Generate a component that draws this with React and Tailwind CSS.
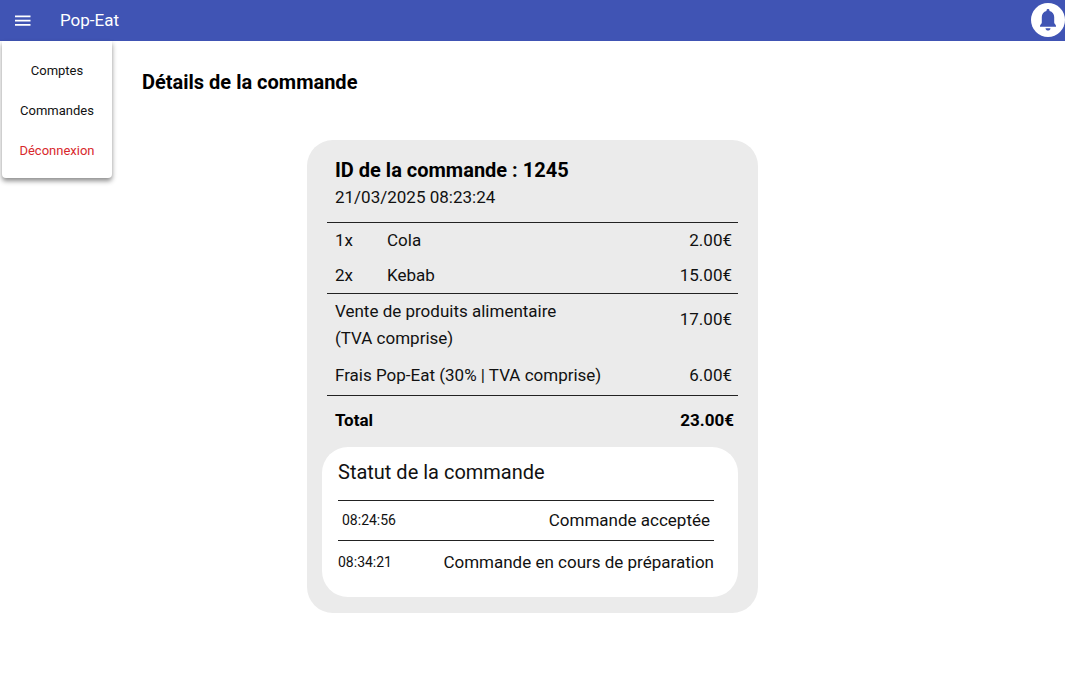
import React from "react";

const items = [
  { qty: "1x", name: "Cola", price: "2.00€" },
  { qty: "2x", name: "Kebab", price: "15.00€" },
];

const navLink = "flex h-10 items-center justify-center";

export default function App() {
  return (
    <div className="min-h-screen bg-white text-[#111] font-['Roboto',sans-serif]">
      <header className="flex h-[41px] items-start justify-between bg-[#4054b4] pt-[3px] pl-3.5 text-white">
        <div className="flex h-[35px] items-center gap-7">
          <button type="button" aria-label="Menu" className="flex h-8 w-[18px] items-center justify-center">
            <svg viewBox="0 0 16 12" className="h-3 w-4" fill="currentColor">
              <path d="M0 .5h15.500v1.700H0zM0 4.800h15.500v1.700H0zM0 9.100h15.500v1.700H0z" />
            </svg>
          </button>
          <a href="#accueil" className="text-[17px]">Pop-Eat</a>
        </div>
        <button type="button" aria-label="Notifications" className="flex size-[34px] items-center justify-center rounded-full bg-white text-[#4054b4]">
          <svg viewBox="0 0 18 22" className="h-[22px] w-[18px]" fill="currentColor">
            <path d="M9 0c-.9 0-1.500.6-1.500 1.400v.5C4.500 2.600 2.800 5 2.800 8v5.500C2.800 15.200 1 15.600 1 17v.8h16V17c0-1.400-1.800-1.800-1.800-3.500V8c0-3-1.700-5.400-4.700-6.100v-.5C10.500.6 9.900 0 9 0z" />
            <path d="M6.500 19.300h5c-.2 1.400-1.100 2.300-2.500 2.300s-2.300-.9-2.500-2.300z" />
          </svg>
        </button>
      </header>

      <div className="relative">
        <nav className="absolute top-0 left-0.5 flex w-[110px] flex-col rounded-b bg-white pt-2.5 pb-[7px] text-[13px] shadow-[0_3px_5px_rgba(0,0,0,0.45)]">
          <a href="#comptes" className={navLink}>Comptes</a>
          <a href="#commandes" className={navLink}>Commandes</a>
          <a href="#deconnexion" className={`${navLink} text-[#d8282c]`}>Déconnexion</a>
        </nav>

        <main className="pt-[27px] pb-10">
          <h1 className="pl-[142px] text-xl leading-7 font-bold text-black">Détails de la commande</h1>
          <section className="mx-auto mt-11 w-full max-w-[451px] rounded-[26px] bg-[#ebebeb] pt-4 pr-5 pb-4 pl-[15px]">
            <div className="pl-[5px]">
              <div className="border-b border-[#222] px-2 pb-3">
                <h2 className="text-xl leading-7 font-bold text-black">ID de la commande : 1245</h2>
                <p className="text-[17px] leading-[26px]">21/03/2025 08:23:24</p>
              </div>
              <table className="w-full text-[17px]">
                <tbody className="leading-[35px]">
                  {items.map((item) => (
                    <tr key={item.name}>
                      <td className="w-[60px] pl-2">{item.qty}</td>
                      <td>{item.name}</td>
                      <td className="pr-1.5 text-right">{item.price}</td>
                    </tr>
                  ))}
                </tbody>
                <tbody className="border-y border-[#222] leading-[27px]">
                  <tr>
                    <td colSpan={2} className="pt-1 pl-2">
                      Vente de produits alimentaire
                      <br />
                      (TVA comprise)
                    </td>
                    <td className="pt-3 pr-1.5 text-right align-top">17.00€</td>
                  </tr>
                  <tr>
                    <td colSpan={2} className="pt-2.5 pb-1.5 pl-2">Frais Pop-Eat (30% | TVA comprise)</td>
                    <td className="pt-2.5 pr-1.5 pb-1.5 text-right">6.00€</td>
                  </tr>
                </tbody>
                <tfoot className="leading-[48px] font-bold text-black">
                  <tr>
                    <td colSpan={2} className="pl-2">Total</td>
                    <td className="pr-1 text-right">23.00€</td>
                  </tr>
                </tfoot>
              </table>
            </div>

            <div className="mt-[3px] rounded-[26px] bg-white pt-[11px] pr-6 pb-3.5 pl-4">
              <h3 className="border-b border-[#222] pb-3.5 text-xl leading-7">Statut de la commande</h3>
              <ol>
                <li className="flex items-center justify-between border-b border-[#222] px-1 leading-[39px]">
                  <time className="text-sm leading-[39px]">08:24:56</time>
                  <span className="text-[17px]">Commande acceptée</span>
                </li>
                <li className="flex items-center justify-between leading-[42px]">
                  <time className="text-sm leading-[42px]">08:34:21</time>
                  <span className="text-[17px]">Commande en cours de préparation</span>
                </li>
              </ol>
            </div>
          </section>
        </main>
      </div>
    </div>
  );
}
